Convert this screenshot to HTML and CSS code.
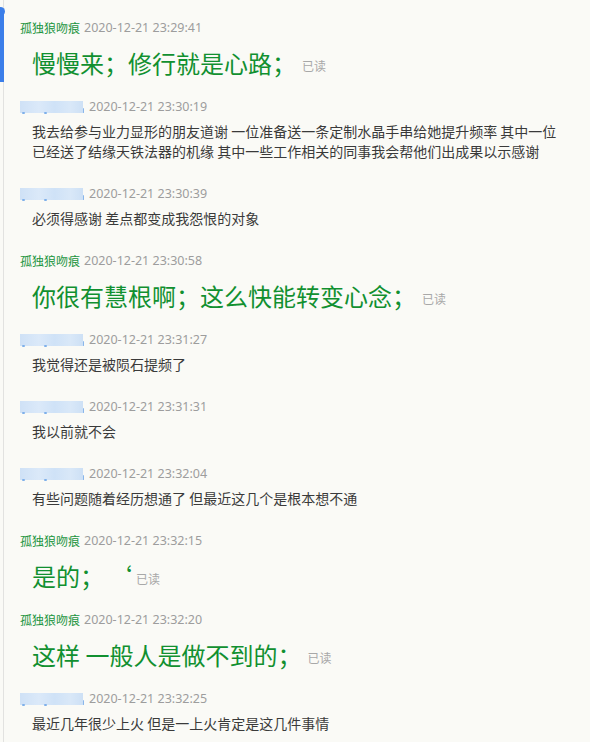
FILE: index.html
```html
<!DOCTYPE html>
<html lang="zh-CN">
<head>
<meta charset="utf-8">
<title>聊天记录</title>
<link rel="stylesheet" href="styles.css">
</head>
<body>
<div class="page">
  <div class="rail"></div>
  <div class="rail-bar"></div>
  <div class="rail-dot"></div>
  <div class="chat">
    <div class="msg msg-big">
      <div class="head"><span class="name">孤独狼吻痕</span><span class="time">2020-12-21 23:29:41</span></div>
      <div class="big"><span class="say">慢慢来；修行就是心路；</span><span class="read">已读</span></div>
    </div>
    <div class="msg">
      <div class="head"><span class="blur"><i class="d1"></i><i class="d2"></i><i class="d3"></i></span><span class="time">2020-12-21 23:30:19</span></div>
      <div class="text"><div class="line">我去给参与业力显形的朋友道谢 一位准备送一条定制水晶手串给她提升频率 其中一位</div><div class="line">已经送了结缘天铁法器的机缘 其中一些工作相关的同事我会帮他们出成果以示感谢</div></div>
    </div>
    <div class="msg">
      <div class="head"><span class="blur"><i class="d1"></i><i class="d2"></i><i class="d3"></i></span><span class="time">2020-12-21 23:30:39</span></div>
      <div class="text"><div class="line">必须得感谢 差点都变成我怨恨的对象</div></div>
    </div>
    <div class="msg msg-big">
      <div class="head"><span class="name">孤独狼吻痕</span><span class="time">2020-12-21 23:30:58</span></div>
      <div class="big"><span class="say">你很有慧根啊；这么快能转变心念；</span><span class="read">已读</span></div>
    </div>
    <div class="msg">
      <div class="head"><span class="blur"><i class="d1"></i><i class="d2"></i><i class="d3"></i></span><span class="time">2020-12-21 23:31:27</span></div>
      <div class="text"><div class="line">我觉得还是被陨石提频了</div></div>
    </div>
    <div class="msg">
      <div class="head"><span class="blur"><i class="d1"></i><i class="d2"></i><i class="d3"></i></span><span class="time">2020-12-21 23:31:31</span></div>
      <div class="text"><div class="line">我以前就不会</div></div>
    </div>
    <div class="msg">
      <div class="head"><span class="blur"><i class="d1"></i><i class="d2"></i><i class="d3"></i></span><span class="time">2020-12-21 23:32:04</span></div>
      <div class="text"><div class="line">有些问题随着经历想通了 但最近这几个是根本想不通</div></div>
    </div>
    <div class="msg msg-big">
      <div class="head"><span class="name">孤独狼吻痕</span><span class="time">2020-12-21 23:32:15</span></div>
      <div class="big"><span class="say">是的；</span><span class="say quote">‘</span><span class="read read-tight">已读</span></div>
    </div>
    <div class="msg msg-big">
      <div class="head"><span class="name">孤独狼吻痕</span><span class="time">2020-12-21 23:32:20</span></div>
      <div class="big"><span class="say">这样 一般人是做不到的；</span><span class="read">已读</span></div>
    </div>
    <div class="msg">
      <div class="head"><span class="blur"><i class="d1"></i><i class="d2"></i><i class="d3"></i></span><span class="time">2020-12-21 23:32:25</span></div>
      <div class="text"><div class="line">最近几年很少上火 但是一上火肯定是这几件事情</div></div>
    </div>
  </div>
</div>
</body>
</html>
```

FILE: styles.css
```css
html, body {
  margin: 0;
  padding: 0;
  background: #fafaf6;
}
.page {
  position: relative;
  width: 590px;
  height: 742px;
  overflow: hidden;
  background: #fafaf6;
  font-family: "Noto Sans CJK SC", sans-serif;
}
.rail {
  position: absolute;
  left: 3px;
  top: 0;
  width: 1px;
  height: 742px;
  background: #e2e2e0;
}
.rail-bar {
  position: absolute;
  left: 0;
  top: 14px;
  width: 4px;
  height: 68px;
  background: #3b7ee9;
}
.rail-dot {
  position: absolute;
  left: -4px;
  top: 7px;
  width: 9px;
  height: 9px;
  border-radius: 50%;
  background: #3b7ee9;
}
.chat {
  padding: 18px 0 0 20px;
}
.msg {
  margin-bottom: 23px;
}
.msg-big {
  margin-bottom: 18px;
}
.head {
  height: 20px;
  display: flex;
  align-items: center;
  gap: 4px;
  white-space: nowrap;
  overflow: visible;
}
.name {
  font-size: 12px;
  line-height: 20px;
  height: 20px;
  color: #1a9440;
}
.time {
  font-family: "Noto Sans", "Open Sans", sans-serif;
  font-size: 12.5px;
  line-height: 20px;
  height: 20px;
  color: #9d9d9d;
}
.blur {
  position: relative;
  display: block;
  width: 63px;
  height: 12px;
  margin-right: 2px;
  background: linear-gradient(90deg, #cfe1f6 0%, #dbe9f9 30%, #cfe2f7 55%, #d9e8f8 80%, #cde0f5 100%);
  filter: blur(0.6px);
}
.blur i {
  position: absolute;
  background: #7fb0ea;
  border-radius: 1px;
}
.blur .d1 { left: 2px; bottom: -1px; width: 3px; height: 2px; }
.blur .d2 { left: 24px; bottom: -1px; width: 3px; height: 2px; }
.blur .d3 { right: -1px; bottom: 0; width: 1px; height: 5px; background: #8ab6ea; }
.text {
  margin: 4px 0 0 12px;
  font-size: 14px;
  color: #3a3a3a;
}
.line {
  height: 20px;
  line-height: 20px;
  white-space: nowrap;
  overflow: visible;
}
.big {
  margin: 9px 0 0 12px;
  height: 32px;
  display: flex;
  align-items: center;
  white-space: nowrap;
}
.say {
  font-size: 24px;
  line-height: 32px;
  height: 32px;
  color: #119030;
}
.quote {
  margin-left: 4px;
}
.read {
  margin-left: 6px;
  margin-top: 6px;
  font-size: 12px;
  line-height: 16px;
  height: 16px;
  color: #a8a8a8;
}
.read-tight {
  margin-left: 4px;
}
```
